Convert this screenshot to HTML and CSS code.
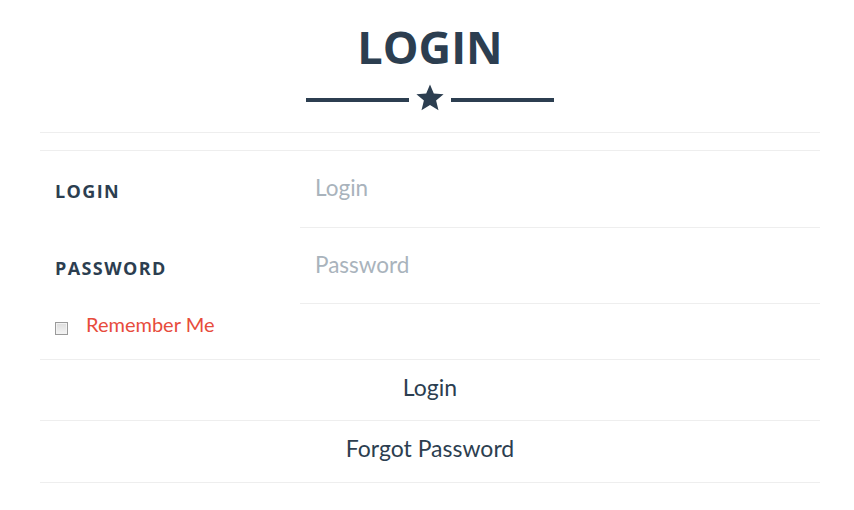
FILE: index.html
```html
<!DOCTYPE html>
<html lang="en">
<head>
    <meta charset="UTF-8">
    <meta name="viewport" content="width=device-width, initial-scale=1.0">
    <title>Login</title>
    <link rel="stylesheet" href="styles.css">
</head>
<body>
    <section class="login_page">
        <header class="login_header">
            <h1>LOGIN</h1>
            <div class="star_divider">
                <span class="divider_line"></span>
                <svg class="divider_star" width="30" height="28" viewBox="0 0 30 28">
                    <polygon points="15,0.5 18.8,9.6 28.6,10.3 21.1,16.6 23.5,26.2 15,21 6.5,26.2 8.9,16.6 1.4,10.3 11.2,9.6" fill="#2c3e50"/>
                </svg>
                <span class="divider_line"></span>
            </div>
        </header>

        <hr class="top_rule">

        <form id="loginForm" class="login_form" action="#" method="POST">
            <div class="form_row first_row">
                <label for="login_name">LOGIN</label>
                <input type="text" id="login_name" name="login_name" placeholder="Login">
            </div>

            <div class="form_row">
                <label for="login_password">PASSWORD</label>
                <input type="password" id="login_password" name="login_password" placeholder="Password">
            </div>

            <div class="remember_row">
                <input type="checkbox" id="remember_me" name="remember_me">
                <label for="remember_me">Remember Me</label>
            </div>

            <button type="submit" class="link_button">Login</button>
            <button type="button" class="link_button last_button">Forgot Password</button>
        </form>
    </section>
</body>
</html>
```

FILE: styles.css
```css
body {
    margin: 0;
    background: #ffffff;
    font-family: Lato, "Open Sans", sans-serif;
    color: #2c3e50;
}

.login_page {
    width: 780px;
    margin-left: 40px;
}

.login_header {
    display: flex;
    flex-direction: column;
    align-items: center;
}

h1 {
    margin: 22px 0 0;
    font-family: "Open Sans", sans-serif;
    font-weight: 700;
    font-size: 45px;
    line-height: 49.5px;
    color: #2c3e50;
}

.star_divider {
    display: flex;
    align-items: center;
    gap: 6px;
    margin-top: 12px;
    height: 28px;
}

.divider_line {
    display: block;
    width: 103px;
    height: 4px;
    margin-top: 4px;
    background: #2c3e50;
}

.divider_star {
    display: block;
}

.top_rule {
    margin: 20px 0 0;
    border: none;
    border-top: 1px solid #eeeeee;
}

.login_form {
    margin-top: 17px;
    border-top: 1px solid #eeeeee;
    display: flex;
    flex-direction: column;
}

.form_row {
    display: flex;
    align-items: stretch;
    height: 76px;
}

.first_row {
    height: 77px;
}

.form_row label {
    width: 260px;
    padding: 4px 0 0 15px;
    box-sizing: border-box;
    display: flex;
    align-items: center;
    font-family: "Open Sans", sans-serif;
    font-weight: 700;
    font-size: 18px;
    letter-spacing: 1.4px;
    color: #2c3e50;
}

.form_row input {
    flex: 1;
    border: none;
    border-bottom: 1px solid #eeeeee;
    padding: 0 15px 2px;
    font-family: Lato, sans-serif;
    font-size: 22.5px;
    color: #2c3e50;
    outline: none;
    background: transparent;
}

.form_row input::placeholder {
    color: #a9b3bc;
}

.remember_row {
    display: flex;
    align-items: flex-start;
    height: 56px;
    padding: 8px 0 0 15px;
    box-sizing: border-box;
    border-bottom: 1px solid #eeeeee;
}

.remember_row input {
    appearance: none;
    width: 13px;
    height: 13px;
    margin: 10px 18px 0 0;
    border: 1px solid #9a9a9a;
    background: linear-gradient(#dcdcdc, #f4f4f4);
    box-shadow: inset 0 0 0 1px #f2f2f2;
}

.remember_row label {
    font-size: 20px;
    line-height: 24px;
    color: #e74c3c;
}

.link_button {
    height: 61px;
    padding: 0 0 6px;
    border: none;
    border-bottom: 1px solid #eeeeee;
    background: transparent;
    font-family: Lato, sans-serif;
    font-size: 23px;
    color: #2c3e50;
    cursor: pointer;
}

.last_button {
    height: 62px;
}
```
